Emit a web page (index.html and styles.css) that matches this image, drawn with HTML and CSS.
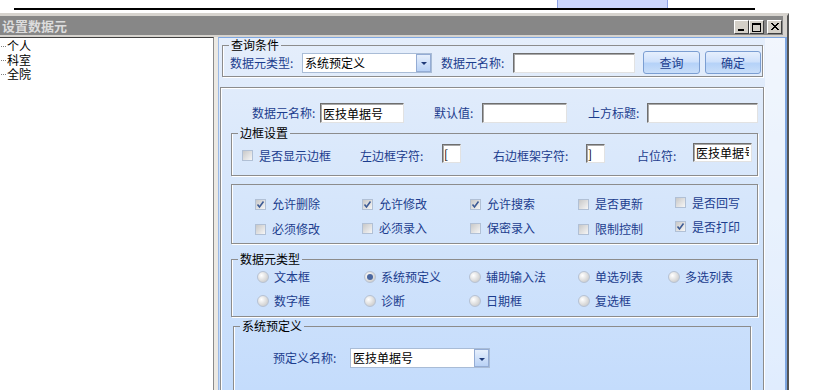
FILE: index.html
```html
<!DOCTYPE html>
<html lang="zh-CN">

<head>
  <meta charset="UTF-8">
  <title>设置数据元</title>
  <link rel="stylesheet" href="styles.css">
</head>

<body>
  <div class="topbar">
    <div class="tabs"><div class="tab"></div></div>
    <div class="rule"></div>
  </div>

  <div class="window">
    <div class="titlebar">
      <div class="title">设置数据元</div>
      <div class="winbtns">
        <span class="winbtn">
          <svg width="9" height="8" viewBox="0 0 9 8"><rect x="1" y="6" width="6" height="2" fill="#000"/></svg>
        </span>
        <span class="winbtn">
          <svg width="9" height="9" viewBox="0 0 9 9"><rect x="0.5" y="0.5" width="8" height="8" fill="none" stroke="#000"/><rect x="0" y="0" width="9" height="2" fill="#000"/></svg>
        </span>
        <span class="winbtn close">
          <svg width="9" height="8" viewBox="0 0 9 8"><path d="M1 0 L8 7 M8 0 L1 7 M2 0 L9 7 M9 0 L2 7" stroke="#000" stroke-width="1"/></svg>
        </span>
      </div>
    </div>

    <div class="winbody">
      <ul class="tree">
        <li>个人</li>
        <li>科室</li>
        <li>全院</li>
      </ul>
      <div class="splitter"></div>

      <div class="rpanel">
        <div class="rmain">
          <!-- 查询条件 -->
          <fieldset class="group qbox">
            <legend>查询条件</legend>
            <div class="qrow">
              <span class="lbl q-type">数据元类型:</span>
              <div class="combo q-combo"><span class="combo-text">系统预定义</span><span class="combo-btn"></span></div>
              <span class="lbl q-name">数据元名称:</span>
              <input class="field q-field" type="text">
              <button class="btn btn-query">查询</button>
              <button class="btn btn-ok">确定</button>
            </div>
          </fieldset>

          <div class="lower">
            <div class="row1">
              <span class="lbl r-name">数据元名称:</span>
              <input class="field r-name-field" type="text" value="医技单据号">
              <span class="lbl r-default">默认值:</span>
              <input class="field r-default-field" type="text">
              <span class="lbl r-title">上方标题:</span>
              <input class="field r-title-field" type="text">
            </div>

            <!-- 边框设置 -->
            <fieldset class="group bbox">
              <legend>边框设置</legend>
              <div class="brow">
                <span class="check"></span>
                <span class="lbl b-show">是否显示边框</span>
                <span class="lbl b-left">左边框字符:</span>
                <input class="field small" type="text" value="[">
                <span class="lbl b-right">右边框架字符:</span>
                <input class="field small" type="text" value="]">
                <span class="lbl b-hold">占位符:</span>
                <input class="field b-hold-field" type="text" value="医技单据号">
              </div>
            </fieldset>

            <fieldset class="group cbox">
              <div class="opt"><span class="check on"><svg width="9" height="9" viewBox="0 0 9 9"><path d="M1.5 4.5 L3.5 7 L7.5 1.5" fill="none" stroke="#3d5b95" stroke-width="1.6"/></svg></span><span class="lbl">允许删除</span></div>
              <div class="opt"><span class="check on"><svg width="9" height="9" viewBox="0 0 9 9"><path d="M1.5 4.5 L3.5 7 L7.5 1.5" fill="none" stroke="#3d5b95" stroke-width="1.6"/></svg></span><span class="lbl">允许修改</span></div>
              <div class="opt"><span class="check on"><svg width="9" height="9" viewBox="0 0 9 9"><path d="M1.5 4.5 L3.5 7 L7.5 1.5" fill="none" stroke="#3d5b95" stroke-width="1.6"/></svg></span><span class="lbl">允许搜索</span></div>
              <div class="opt"><span class="check"></span><span class="lbl">是否更新</span></div>
              <div class="opt up"><span class="check"></span><span class="lbl">是否回写</span></div>
              <div class="opt down"><span class="check"></span><span class="lbl">必须修改</span></div>
              <div class="opt"><span class="check"></span><span class="lbl">必须录入</span></div>
              <div class="opt"><span class="check"></span><span class="lbl">保密录入</span></div>
              <div class="opt down"><span class="check"></span><span class="lbl">限制控制</span></div>
              <div class="opt up"><span class="check on"><svg width="9" height="9" viewBox="0 0 9 9"><path d="M1.5 4.5 L3.5 7 L7.5 1.5" fill="none" stroke="#3d5b95" stroke-width="1.6"/></svg></span><span class="lbl">是否打印</span></div>
            </fieldset>

            <!-- 数据元类型 -->
            <fieldset class="group tbox">
              <legend>数据元类型</legend>
              <div class="radios">
                <div class="opt"><span class="radio"></span><span class="lbl">文本框</span></div>
                <div class="opt"><span class="radio on"></span><span class="lbl">系统预定义</span></div>
                <div class="opt"><span class="radio"></span><span class="lbl">辅助输入法</span></div>
                <div class="opt"><span class="radio"></span><span class="lbl">单选列表</span></div>
                <div class="opt"><span class="radio"></span><span class="lbl">多选列表</span></div>
                <div class="opt"><span class="radio"></span><span class="lbl">数字框</span></div>
                <div class="opt"><span class="radio"></span><span class="lbl">诊断</span></div>
                <div class="opt"><span class="radio"></span><span class="lbl">日期框</span></div>
                <div class="opt"><span class="radio"></span><span class="lbl">复选框</span></div>
              </div>
            </fieldset>

            <!-- 系统预定义 -->
            <fieldset class="group sbox">
              <legend>系统预定义</legend>
              <div class="srow">
                <span class="lbl s-name">预定义名称:</span>
                <div class="combo s-combo"><span class="combo-text">医技单据号</span><span class="combo-btn"></span></div>
              </div>
            </fieldset>
          </div>
        </div>
        <div class="rstrip"></div>
      </div>
    </div>
  </div>
</body>

</html>
```

FILE: styles.css
```css
* {
  box-sizing: border-box;
}

body {
  margin: 0;
  width: 813px;
  height: 390px;
  overflow: hidden;
  background: #fff;
  font-family: "Noto Sans CJK SC", "Liberation Sans", sans-serif;
  font-size: 12px;
  line-height: 14px;
  color: #000;
}

/* верхняя полоса */
.topbar {
  height: 13px;
  padding-left: 14px;
}

.tabs {
  height: 8px;
  padding-left: 543px;
}

.tab {
  width: 111px;
  height: 8px;
  background: #ccd6fb;
  border-left: 1px solid #8ea2e6;
  border-right: 1px solid #8ea2e6;
}

.rule {
  width: 741px;
  height: 2px;
  background: #000;
}

/* окно */
.window {
  width: 789px;
  background: #d6d3ce;
  border-top: 3px solid #d6d3ce;
  border-right: 2px solid #555;
}

.titlebar {
  display: flex;
  height: 19px;
  margin-right: 4px;
  background: #878787;
}

.title {
  flex: 1;
  padding-left: 2px;
  font-size: 13px;
  font-weight: bold;
  line-height: 19px;
  color: #dcdcdc;
}

.winbtns {
  display: flex;
  padding-top: 4px;
  padding-right: 1px;
}

.winbtn {
  display: flex;
  align-items: center;
  justify-content: center;
  width: 15px;
  height: 14px;
  background: #d4d0c8;
  border: 1px solid;
  border-color: #fff #404040 #404040 #fff;
}

.winbtn.close {
  margin-left: 3px;
}

.winbody {
  display: flex;
  height: 355px;
  padding-top: 2px;
}

/* дерево */
.tree {
  width: 214px;
  margin: 0;
  padding: 1px 0 0;
  list-style: none;
  background: #fff;
  border-top: 1px solid #404040;
  border-right: 1px solid #8a8a8a;
}

.tree li {
  display: flex;
  align-items: center;
  height: 14px;
}

.tree li::before {
  content: "";
  width: 5px;
  margin: 0 1px 0 1px;
  border-top: 1px dotted #808080;
}

.splitter {
  width: 4px;
  background: #ece9e3;
}

/* правая панель */
.rpanel {
  flex: 1;
  display: flex;
  border-top: 1px solid #7ea6e0;
  border-left: 1px solid #9cb9e4;
  border-right: 2px solid #7ea6e0;
  background: linear-gradient(#e5eefb, #d6e6fb 45%, #c4dcfc);
}

.rmain {
  width: 546px;
  display: flex;
  flex-direction: column;
}

.rstrip {
  flex: 1;
  background-color: rgba(255, 255, 255, 0.3);
  background-image: radial-gradient(rgba(255, 255, 255, 0.55) 0.6px, transparent 0.8px);
  background-size: 2px 2px;
}

.group {
  margin: 0;
  padding: 0;
  min-width: 0;
  border: 1px solid #8c8c8c;
  box-shadow: inset 1px 0 0 #fff, 1px 1px 0 #fff;
}

.group legend {
  margin-left: 6px;
  padding: 0 2px;
  font-size: 12px;
  line-height: 12px;
  color: #000;
}

.lbl {
  color: #1c3d8e;
  white-space: nowrap;
}

.field {
  height: 20px;
  margin: 0;
  padding: 0 2px;
  font-family: inherit;
  font-size: 12px;
  color: #000;
  background: #fff;
  border: 1px solid;
  border-color: #6e6e6e #e2e2e2 #e2e2e2 #6e6e6e;
  box-shadow: inset 1px 1px 0 #a8a8a8;
  outline: none;
}

.combo {
  display: flex;
  align-items: center;
  height: 20px;
  background: #fff;
  border: 1px solid #a9bcd6;
}

.combo-text {
  flex: 1;
  padding-left: 2px;
}

.combo-btn {
  display: flex;
  align-items: center;
  justify-content: center;
  width: 15px;
  height: 18px;
  background: linear-gradient(#e6effc, #b9d2f6);
  border: 1px solid #94acd4;
}

.combo-btn::after {
  content: "";
  margin-top: 2px;
  border-left: 3px solid transparent;
  border-right: 3px solid transparent;
  border-top: 3px solid #1f3a78;
}

.btn {
  height: 23px;
  padding: 0;
  font-family: inherit;
  font-size: 12px;
  color: #1c3d8e;
  border: 1px solid #7b9ed2;
  border-radius: 3px;
  background: linear-gradient(#e6effd, #cfe1fb 45%, #b5d2f8 55%, #c9def9);
}

/* 查询条件 */
.qbox {
  width: 541px;
  margin: 1px 0 0 3px;
  padding-bottom: 2px;
}

.qrow {
  display: flex;
  align-items: center;
  height: 23px;
  padding-left: 7px;
}

.q-type {
  width: 72px;
}

.q-combo {
  width: 130px;
}

.q-name {
  width: 72px;
  margin-left: 9px;
}

.q-field {
  width: 122px;
}

.btn-query {
  width: 57px;
  margin-left: 8px;
}

.btn-ok {
  width: 56px;
  margin-left: 5px;
}

/* нижняя часть */
.lower {
  flex: 1;
  width: 544px;
  margin: 10px 0 0 1px;
  border: 1px solid #8c8c8c;
  border-bottom: none;
  box-shadow: inset 1px 1px 0 #fff, 1px 0 0 #fff;
  overflow: hidden;
}

.row1 {
  display: flex;
  align-items: center;
  height: 20px;
  margin-top: 15px;
  padding-left: 31px;
}

.r-name {
  width: 66px;
}

.r-name-field {
  width: 84px;
  margin-left: 2px;
}

.r-default {
  width: 46px;
  margin-left: 30px;
}

.r-default-field {
  width: 85px;
  margin-left: 2px;
}

.r-title {
  width: 57px;
  margin-left: 21px;
}

.r-title-field {
  width: 111px;
  margin-left: 2px;
}

/* 边框设置 */
.bbox {
  width: 527px;
  margin: 4px 0 0 10px;
  padding-bottom: 12px;
}

.brow {
  display: flex;
  align-items: flex-end;
  height: 20px;
  margin-top: 4px;
  padding-left: 10px;
}

.brow .check {
  margin-bottom: 2px;
}

.b-show {
  width: 101px;
  margin-left: 6px;
}

.b-left {
  width: 82px;
}

.field.small {
  width: 19px;
  height: 19px;
  padding: 0 1px;
}

.b-right {
  width: 93px;
  margin-left: 32px;
}

.b-hold {
  width: 56px;
  margin-left: 32px;
}

.b-hold-field {
  width: 59px;
  height: 19px;
  margin-bottom: 1px;
}

/* флажки */
.cbox {
  display: grid;
  grid-template-columns: 107px 108px 108px 97px auto;
  grid-auto-rows: 20px;
  row-gap: 4px;
  width: 527px;
  margin: 8px 0 0 10px;
  padding: 9px 0 5px 23px;
}

.opt {
  display: flex;
  align-items: center;
  gap: 6px;
}

.opt.up {
  margin-top: -3px;
}

.opt.down {
  margin-top: 2px;
}

.check {
  display: flex;
  align-items: center;
  justify-content: center;
  flex: none;
  width: 11px;
  height: 11px;
  border: 1px solid #b1c0d5;
  background: linear-gradient(135deg, #c8c8c8, #f6f6f6);
}

/* 数据元类型 */
.tbox {
  width: 527px;
  margin: 9px 0 0 10px;
  padding: 2px 0 5px;
}

.radios {
  display: grid;
  grid-template-columns: 107px 105px 109px 90px auto;
  grid-auto-rows: 20px;
  row-gap: 4px;
  padding-left: 25px;
}

.radios .opt {
  gap: 5px;
}

.radio {
  display: flex;
  align-items: center;
  justify-content: center;
  flex: none;
  width: 12px;
  height: 12px;
  border: 1px solid #b6c2d4;
  border-radius: 50%;
  background: radial-gradient(circle at 35% 35%, #fff, #c9c9c9 85%);
}

.radio.on::after {
  content: "";
  width: 6px;
  height: 6px;
  border-radius: 50%;
  background: #4a67a0;
}

/* 系统预定义 */
.sbox {
  width: 518px;
  margin: 3px 0 0 12px;
  padding: 16px 0 40px;
}

.srow {
  display: flex;
  align-items: center;
  height: 20px;
  padding-left: 39px;
}

.s-name {
  width: 77px;
}

.s-combo {
  width: 140px;
}
```
